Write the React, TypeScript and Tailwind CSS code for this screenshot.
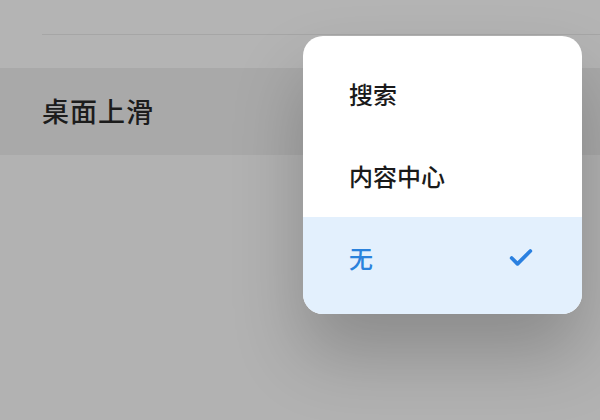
import { Check } from "lucide-react";

export default function App() {
  const options = [
    { label: "搜索", selected: false },
    { label: "内容中心", selected: false },
    { label: "无", selected: true },
  ];

  return (
    <div
      className="relative w-[600px] h-[420px] overflow-hidden bg-[#b2b2b2]"
      style={{ fontFamily: '"Noto Sans CJK SC", "Noto Sans", sans-serif' }}
    >
      {/* settings list behind the dim */}
      <div className="h-[68px] bg-[#b4b4b4] pt-[34px]">
        <div className="ml-[42px] border-t border-[#a6a6a6]" />
      </div>
      <div className="h-[87px] bg-[#a9a9a9] flex items-center pl-[42px]">
        <span className="text-[27px] font-medium text-[#1c1c1c] tracking-[1px]">桌面上滑</span>
      </div>

      {/* popup menu */}
      <div className="absolute left-[303px] top-[36px] w-[279px] rounded-[20px] bg-white overflow-hidden pt-[17px] shadow-[0_40px_70px_rgba(0,0,0,0.22)]">
        {options.map((opt) =>
          opt.selected ? (
            <div
              key={opt.label}
              className="h-[97px] pb-[15px] bg-[#e3f0fd] flex items-center justify-between pl-[46px] pr-[47px]"
            >
              <span className="text-[24px] font-medium text-[#2a82dc]">{opt.label}</span>
              <Check className="text-[#2a80e0]" size={28} strokeWidth={3.2} />
            </div>
          ) : (
            <div key={opt.label} className="h-[82px] flex items-center pl-[46px]">
              <span className="text-[24px] font-medium text-[#1a1a1a]">{opt.label}</span>
            </div>
          )
        )}
      </div>
    </div>
  );
}
